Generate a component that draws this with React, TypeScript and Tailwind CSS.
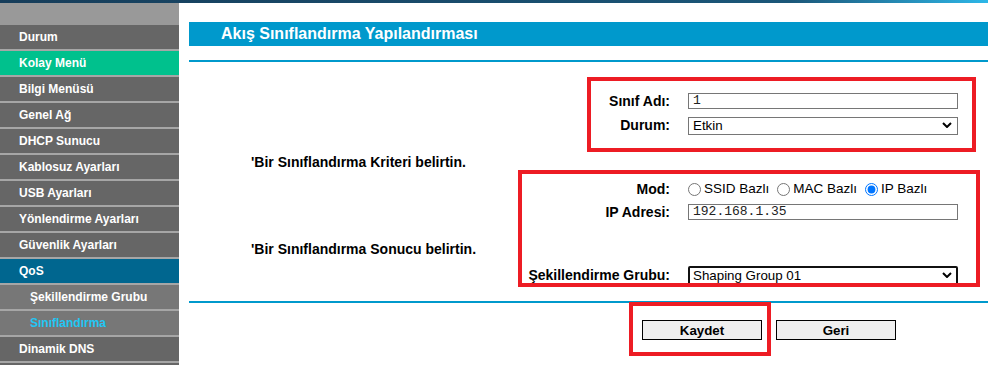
import React from "react";

type MenuItem = { label: string; kind?: "main" | "active" | "section" | "sub" | "subActive" };

const menu: MenuItem[] = [
  { label: "Durum" },
  { label: "Kolay Menü", kind: "active" },
  { label: "Bilgi Menüsü" },
  { label: "Genel Ağ" },
  { label: "DHCP Sunucu" },
  { label: "Kablosuz Ayarları" },
  { label: "USB Ayarları" },
  { label: "Yönlendirme Ayarları" },
  { label: "Güvenlik Ayarları" },
  { label: "QoS", kind: "section" },
  { label: "Şekillendirme Grubu", kind: "sub" },
  { label: "Sınıflandırma", kind: "subActive" },
  { label: "Dinamik DNS" },
];

function rowClass(kind: MenuItem["kind"]) {
  switch (kind) {
    case "active":
      return "bg-[#00c18d] text-white pl-[19px]";
    case "section":
      return "bg-[#00668f] text-white pl-[19px]";
    case "sub":
      return "bg-[#777777] text-white pl-[30px]";
    case "subActive":
      return "bg-[#777777] text-[#22c6f4] pl-[30px]";
    default:
      return "bg-[#666666] text-white pl-[19px]";
  }
}

function Sidebar() {
  return (
    <div className="w-[179px] shrink-0 bg-[#a6a6a6]">
      <div className="h-[22px] bg-[#999999]" />
      {menu.map((item) => (
        <div
          key={item.label}
          className={`h-6 mb-[2px] leading-6 text-[12px] font-bold whitespace-nowrap ${rowClass(item.kind)}`}
        >
          {item.label}
        </div>
      ))}
      {/* next menu row, only its top edge is visible */}
      <div className="h-6 bg-[#666666]" />
    </div>
  );
}

function Chevron() {
  return (
    <svg
      className="pointer-events-none absolute right-[6px] top-1/2 -translate-y-1/2"
      width="10"
      height="6"
      viewBox="0 0 10 6"
    >
      <path d="M1 1l4 4 4-4" fill="none" stroke="#000" strokeWidth="2" />
    </svg>
  );
}

function FormRow({ label, children, className = "" }: { label: string; children: React.ReactNode; className?: string }) {
  return (
    <div className={`flex items-center ${className}`}>
      <div className="w-[481px] text-right text-[14px] font-bold text-black leading-4 whitespace-nowrap">{label}</div>
      <div className="ml-[18px] flex items-center">{children}</div>
    </div>
  );
}

function Radio({ label, checked, first }: { label: string; checked?: boolean; first?: boolean }) {
  return (
    <label className={`flex items-center ${first ? "" : "ml-[8px]"}`}>
      <input type="radio" name="mod" defaultChecked={checked} className="m-0 w-[13px] h-[13px]" />
      <span className="ml-[3px] text-[13.5px] leading-4 text-black">{label}</span>
    </label>
  );
}

export default function App() {
  return (
    <div className="relative w-[988px] h-[365px] overflow-hidden bg-white font-['Liberation_Sans',Arial,sans-serif]">
      <div className="h-[3px] bg-linear-to-r from-[#163d5a] via-[#1b5779] via-80% to-[#2db7e8]" />

      <div className="flex">
        <Sidebar />

        <div className="flex-1 pl-[10px]">
          <div className="mt-[19px] h-6 bg-[#0099cc] pl-[32px] text-[16px] font-bold leading-6 text-white">
            Akış Sınıflandırma Yapılandırması
          </div>
          <div className="mt-[14px] h-[2px] bg-[#0099cc]" />

          <FormRow label="Sınıf Adı:" className="mt-[31px] h-4">
            <input
              readOnly
              defaultValue="1"
              className="h-4 w-[270px] border border-[#767676] pl-[4px] font-['Liberation_Mono',monospace] text-[13px] leading-4 text-[#222]"
            />
          </FormRow>

          <FormRow label="Durum:" className="mt-[7px] h-[18px]">
            <div className="relative">
              <select className="h-[18px] w-[270px] appearance-none border border-[#767676] pl-[4px] text-[13.33px] leading-4 text-black">
                <option>Etkin</option>
              </select>
              <Chevron />
            </div>
          </FormRow>

          <div className="mt-[20px] pl-[62px] text-[14px] font-bold leading-4 text-black">
            'Bir Sınıflandırma Kriteri belirtin.
          </div>

          <FormRow label="Mod:" className="mt-[11px] h-4">
            <Radio label="SSID Bazlı" first />
            <Radio label="MAC Bazlı" />
            <Radio label="IP Bazlı" checked />
          </FormRow>

          <FormRow label="IP Adresi:" className="mt-[7px] h-4">
            <input
              readOnly
              defaultValue="192.168.1.35"
              className="h-4 w-[270px] border border-[#767676] pl-[4px] font-['Liberation_Mono',monospace] text-[13px] leading-4 text-[#222]"
            />
          </FormRow>

          <div className="mt-[21px] pl-[62px] text-[14px] font-bold leading-4 text-black">
            'Bir Sınıflandırma Sonucu belirtin.
          </div>

          <FormRow label="Şekillendirme Grubu:" className="mt-[8px] h-[19px]">
            <div className="relative">
              <select className="h-[19px] w-[270px] appearance-none rounded-[2px] border-2 border-[#111] pl-[3px] text-[13.33px] leading-4 text-black">
                <option>Shaping Group 01</option>
              </select>
              <Chevron />
            </div>
          </FormRow>

          <div className="mt-[17px] h-[2px] bg-[#0099cc]" />

          <div className="mt-[17px] flex pl-[453px]">
            <button className="h-5 w-[120px] border border-black bg-[#efefef] text-[13.33px] font-bold text-black">
              Kaydet
            </button>
            <button className="ml-[14px] h-5 w-[120px] border border-black bg-[#efefef] text-[13.33px] font-bold text-black">
              Geri
            </button>
          </div>
        </div>
      </div>

      {/* red annotation boxes drawn over the form */}
      <div className="pointer-events-none absolute left-[587px] top-[77px] h-[75px] w-[389px] border-4 border-[#ed1c24]" />
      <div className="pointer-events-none absolute left-[518px] top-[170px] h-[117px] w-[462px] border-4 border-[#ed1c24]" />
      <div className="pointer-events-none absolute left-[629px] top-[302px] h-[54px] w-[142px] border-4 border-[#ed1c24]" />
    </div>
  );
}
